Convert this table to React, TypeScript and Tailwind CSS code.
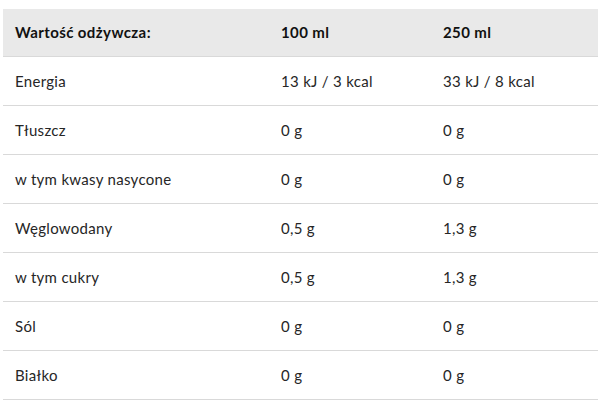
import React from 'react'

const rows: [string, string, string][] = [
  ['Energia', '13 kJ / 3 kcal', '33 kJ / 8 kcal'],
  ['Tłuszcz', '0 g', '0 g'],
  ['w tym kwasy nasycone', '0 g', '0 g'],
  ['Węglowodany', '0,5 g', '1,3 g'],
  ['w tym cukry', '0,5 g', '1,3 g'],
  ['Sól', '0 g', '0 g'],
  ['Białko', '0 g', '0 g'],
]

const App = () => {
  return (
    <div className="w-[607px] h-[407px] bg-white pt-[9px] pl-[3px] font-['Lato',sans-serif] text-[15px] text-[#262626]">
      <div className="w-[595px]">
        <div className="grid grid-cols-[266px_162px_167px] h-[48px] items-center bg-[#e9e9e9] border-b border-[#d9d9d9] font-bold tracking-[0.4px] text-[#111]">
          <div className="pl-3">Wartość odżywcza:</div>
          <div className="pl-3">100 ml</div>
          <div className="pl-3">250 ml</div>
        </div>
        {rows.map((r) => (
          <div key={r[0]} className="grid grid-cols-[266px_162px_167px] h-[49px] items-center border-b border-[#d9d9d9] tracking-[0.3px]">
            <div className="pl-3">{r[0]}</div>
            <div className="pl-3">{r[1]}</div>
            <div className="pl-3">{r[2]}</div>
          </div>
        ))}
      </div>
    </div>
  )
}

export default App
